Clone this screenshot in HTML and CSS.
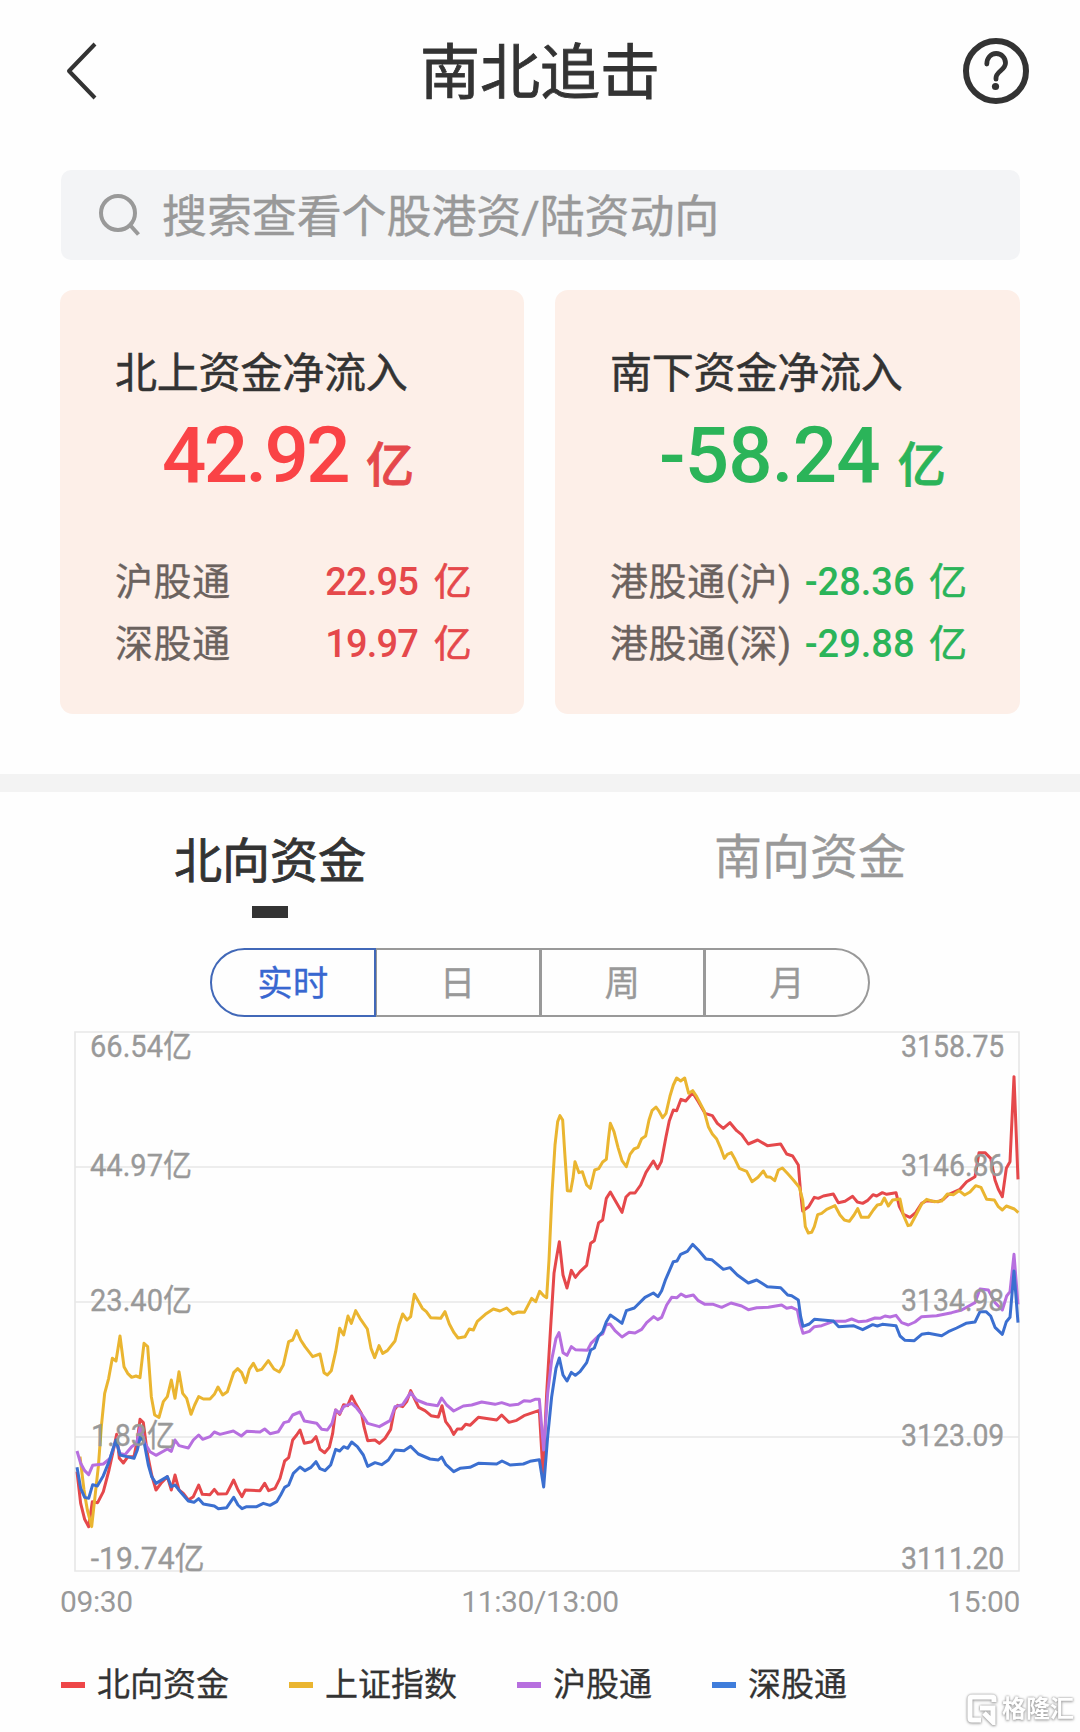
FILE: index.html
```html
<!DOCTYPE html>
<html lang="zh-CN">
<head>
<meta charset="utf-8">
<title>南北追击</title>
<link rel="stylesheet" href="styles.css">
</head>
<body>
<header class="header">
  <svg class="back" width="36" height="64" viewBox="0 0 36 64"><path d="M32 5 6 32 32 59" fill="none" stroke="#333" stroke-width="4" stroke-linejoin="round"/></svg>
  <h1 class="title">南北追击</h1>
  <svg class="help" width="68" height="68" viewBox="0 0 68 68" fill="none" stroke="#333" stroke-width="6">
    <circle cx="34" cy="34" r="30"/>
    <path d="M24.800 27c0-6 4-10.500 9.400-10.500s9.300 4.300 9.300 9.500c0 7-9.500 8.500-9.500 15v1.200" stroke-width="4.800" stroke-linecap="round"/>
    <circle cx="33.500" cy="49.500" r="3.600" fill="#333" stroke="none"/>
  </svg>
</header>

<div class="search">
  <svg width="44" height="44" viewBox="0 0 44 44" fill="none" stroke="#999" stroke-width="4"><circle cx="20" cy="20" r="17"/><path d="M32 32 40.500 41.500"/></svg>
  <span>搜索查看个股港资/陆资动向</span>
</div>

<section class="cards">
  <article class="card up">
    <h2>北上资金净流入</h2>
    <p class="total"><span class="num">42.92</span><span class="unit">亿</span></p>
    <div class="row"><span>沪股通</span><b>22.95 <i>亿</i></b></div>
    <div class="row"><span>深股通</span><b>19.97 <i>亿</i></b></div>
  </article>
  <article class="card down">
    <h2>南下资金净流入</h2>
    <p class="total"><span class="num">-58.24</span><span class="unit">亿</span></p>
    <div class="row"><span>港股通(沪)</span><b>-28.36 <i>亿</i></b></div>
    <div class="row"><span>港股通(深)</span><b>-29.88 <i>亿</i></b></div>
  </article>
</section>

<div class="divider"></div>

<nav class="tabs">
  <div class="tab active">北向资金</div>
  <div class="tab">南向资金</div>
</nav>

<div class="periods">
  <div class="period active">实时</div>
  <div class="period">日</div>
  <div class="period">周</div>
  <div class="period">月</div>
</div>

<svg class="chart" width="948" height="543" viewBox="-6 -6 2844 1629">
  <g class="grid">
    <path d="M0 0H2832V1617H0ZM0 405H2832M0 810H2832M0 1215H2832"/>
  </g>
  <g class="lines">
    <polyline stroke="#e5484b" points="6,1319 17,1414 29,1462 41,1484 52,1409 68,1412 85,1379 102,1314 113,1264 125,1207 133,1279 145,1293 159,1274 177,1274 187,1224 195,1162 205,1172 217,1264 230,1329 243,1374 258,1354 277,1334 289,1374 300,1329 312,1374 325,1384 340,1404 355,1394 371,1359 382,1387 405,1388 418,1372 429,1386 455,1385 476,1344 489,1374 501,1394 511,1374 555,1376 569,1354 581,1376 600,1369 615,1339 629,1287 641,1277 653,1224 665,1209 675,1194 688,1234 710,1229 723,1214 735,1252 749,1262 763,1246 773,1204 782,1134 794,1147 806,1118 818,1121 830,1092 843,1117 860,1146 867,1184 878,1226 900,1224 913,1234 930,1219 947,1192 958,1134 968,1120 983,1124 995,1109 1007,1076 1019,1101 1031,1126 1050,1136 1068,1151 1090,1155 1101,1121 1112,1169 1125,1186 1136,1207 1147,1191 1160,1191 1172,1177 1185,1180 1210,1156 1265,1164 1280,1149 1302,1171 1325,1165 1347,1151 1393,1135 1404,1324 1415,1084 1427,884 1437,724 1445,674 1453,629 1464,729 1476,768 1489,715 1501,736 1515,719 1535,700 1547,634 1558,626 1571,572 1583,564 1594,499 1606,480 1621,506 1641,541 1653,495 1665,483 1680,483 1697,459 1713,421 1735,387 1748,410 1759,389 1773,314 1783,266 1795,234 1805,236 1818,202 1832,207 1853,182 1870,209 1890,244 1912,251 1927,274 1945,289 1965,272 1985,296 2000,308 2020,336 2048,324 2077,341 2117,336 2135,366 2153,372 2170,399 2177,484 2183,537 2201,524 2218,496 2230,499 2245,492 2275,486 2290,512 2310,508 2333,493 2347,510 2363,514 2377,506 2394,488 2405,492 2422,482 2435,487 2463,482 2473,524 2485,547 2505,556 2522,542 2540,514 2555,506 2590,509 2605,502 2620,488 2655,472 2675,449 2700,434 2712,362 2730,362 2747,379 2760,444 2770,472 2782,494 2794,409 2805,389 2817,134 2829,442"/>
    <polyline stroke="#eab530" points="15,1274 27,1374 37,1434 50,1484 60,1394 70,1304 79,1184 89,1084 101,1039 112,979 123,987 135,912 147,1004 158,1024 170,1036 183,1032 195,1037 207,934 218,944 229,1094 239,1149 252,1156 265,1109 277,1094 289,1044 300,1099 312,1019 323,1084 335,1099 348,1147 359,1119 371,1094 385,1101 405,1101 418,1087 429,1065 443,1089 457,1079 476,1022 488,1010 500,1022 512,1052 523,1012 535,994 547,1016 560,1012 580,986 597,1011 613,1020 625,999 641,929 653,924 665,896 677,924 690,944 713,974 735,966 747,1022 757,1029 769,1016 782,959 794,889 806,909 819,852 829,874 842,836 855,859 877,891 888,949 899,977 912,941 923,964 937,956 960,927 972,879 983,846 996,864 1007,854 1018,787 1031,809 1042,829 1054,839 1067,857 1097,859 1110,839 1123,876 1137,902 1149,918 1170,914 1183,891 1195,894 1207,868 1231,847 1255,831 1275,837 1295,828 1313,846 1330,840 1348,841 1370,799 1382,809 1394,778 1406,791 1415,797 1422,684 1431,484 1440,339 1448,269 1455,251 1463,264 1470,374 1477,476 1487,477 1494,439 1500,389 1512,422 1522,419 1535,459 1546,469 1559,414 1571,410 1583,390 1594,382 1600,324 1606,274 1617,299 1629,346 1641,386 1654,404 1665,367 1677,351 1689,346 1700,320 1712,312 1722,264 1731,236 1743,225 1753,239 1763,257 1773,244 1785,192 1795,159 1805,138 1817,147 1829,138 1841,184 1853,176 1865,194 1887,236 1900,284 1912,306 1925,321 1936,346 1948,379 1957,367 1969,362 1980,382 1993,409 2015,418 2031,449 2049,436 2065,417 2075,434 2087,436 2099,446 2110,414 2122,408 2137,424 2155,444 2173,466 2183,504 2191,584 2200,603 2210,601 2218,584 2228,548 2240,544 2255,532 2280,521 2295,549 2308,564 2323,568 2337,549 2348,530 2359,556 2380,556 2395,534 2407,519 2418,517 2428,498 2440,522 2453,504 2475,501 2485,549 2499,581 2507,579 2523,549 2540,516 2555,502 2577,509 2600,507 2617,486 2635,488 2652,476 2669,489 2685,480 2702,461 2718,466 2735,502 2758,504 2770,524 2782,534 2794,522 2818,531 2830,542"/>
    <polyline stroke="#b76fdf" points="6,1257 17,1294 29,1316 41,1328 53,1300 85,1296 105,1279 123,1226 135,1264 150,1268 170,1244 185,1234 196,1184 210,1234 225,1259 243,1270 277,1251 289,1258 300,1224 312,1241 340,1248 355,1224 371,1209 383,1222 405,1214 418,1200 435,1207 475,1197 499,1212 515,1198 555,1200 569,1191 585,1205 610,1199 627,1172 641,1168 653,1149 675,1140 688,1167 725,1174 740,1192 757,1194 771,1174 782,1134 794,1144 806,1124 830,1114 845,1128 865,1154 878,1174 913,1184 945,1166 960,1124 983,1118 1007,1082 1025,1104 1055,1116 1088,1121 1100,1098 1115,1119 1136,1137 1165,1122 1190,1119 1220,1110 1260,1117 1280,1112 1305,1120 1330,1117 1347,1106 1365,1108 1380,1102 1393,1102 1406,1254 1418,1084 1430,984 1443,919 1452,902 1464,962 1476,970 1489,944 1501,953 1537,955 1548,934 1570,912 1583,906 1593,879 1605,876 1620,896 1641,915 1662,901 1680,903 1700,892 1715,872 1736,854 1748,863 1760,856 1775,819 1790,796 1806,797 1818,786 1832,794 1855,789 1870,806 1890,817 1915,817 1940,826 1968,813 2000,822 2020,833 2045,827 2080,826 2120,819 2135,829 2150,826 2167,834 2175,874 2184,904 2203,898 2218,884 2240,881 2275,868 2310,868 2330,861 2350,869 2375,867 2400,858 2415,859 2430,852 2445,855 2463,850 2480,872 2500,879 2520,870 2540,854 2585,851 2630,842 2660,834 2700,812 2715,771 2740,774 2760,812 2782,834 2795,792 2805,779 2817,667 2829,817"/>
    <polyline stroke="#3b6fd0" points="6,1306 17,1369 29,1396 41,1399 53,1358 67,1362 85,1331 102,1289 113,1254 123,1224 135,1269 155,1274 177,1279 187,1254 196,1214 207,1229 220,1299 230,1334 243,1354 277,1334 289,1364 300,1359 320,1384 340,1407 357,1411 371,1400 385,1416 418,1422 430,1430 455,1427 476,1396 489,1419 501,1430 515,1424 545,1424 565,1414 585,1420 605,1409 617,1389 629,1366 641,1359 655,1324 675,1305 690,1316 708,1306 723,1289 735,1310 750,1316 767,1299 782,1252 794,1257 806,1244 818,1249 830,1230 847,1244 865,1269 878,1303 900,1292 920,1298 940,1284 960,1254 987,1256 1007,1243 1030,1266 1065,1281 1090,1284 1100,1275 1113,1298 1136,1319 1155,1309 1185,1306 1210,1294 1265,1296 1281,1287 1305,1299 1345,1296 1365,1288 1393,1283 1406,1365 1418,1214 1430,1094 1443,1009 1453,978 1464,1029 1476,1047 1489,1021 1501,1030 1515,1019 1535,992 1547,954 1558,948 1571,912 1583,899 1594,869 1606,849 1622,860 1641,874 1654,836 1678,828 1710,796 1735,783 1749,794 1760,776 1772,742 1795,689 1806,687 1817,667 1837,658 1853,637 1870,654 1893,681 1910,683 1945,712 1965,707 1987,729 2020,753 2045,744 2077,764 2117,767 2138,789 2150,791 2170,804 2177,854 2184,883 2203,876 2218,862 2275,867 2291,884 2335,881 2363,893 2393,878 2407,882 2422,877 2463,881 2475,912 2490,925 2518,926 2540,907 2560,904 2600,911 2620,899 2645,888 2673,874 2700,870 2715,839 2733,839 2747,852 2760,886 2782,907 2794,869 2805,856 2817,717 2829,872"/>
  </g>
  <g class="labels">
    <text x="45" y="75" textLength="306" lengthAdjust="spacingAndGlyphs">66.54亿</text>
    <text x="45" y="432" textLength="306" lengthAdjust="spacingAndGlyphs">44.97亿</text>
    <text x="45" y="837" textLength="306" lengthAdjust="spacingAndGlyphs">23.40亿</text>
    <text x="48" y="1242" textLength="254" lengthAdjust="spacingAndGlyphs">1.83亿</text>
    <text x="47" y="1611" textLength="342" lengthAdjust="spacingAndGlyphs">-19.74亿</text>
    <text x="2478" y="75" textLength="310" lengthAdjust="spacingAndGlyphs">3158.75</text>
    <text x="2478" y="432" textLength="310" lengthAdjust="spacingAndGlyphs">3146.86</text>
    <text x="2478" y="837" textLength="310" lengthAdjust="spacingAndGlyphs">3134.98</text>
    <text x="2478" y="1242" textLength="310" lengthAdjust="spacingAndGlyphs">3123.09</text>
    <text x="2478" y="1611" textLength="310" lengthAdjust="spacingAndGlyphs">3111.20</text>
  </g>
</svg>

<div class="axis"><span>09:30</span><span>11:30/13:00</span><span>15:00</span></div>

<footer class="footer">
  <div class="legend">
    <span class="key north">北向资金</span>
    <span class="key index">上证指数</span>
    <span class="key hu">沪股通</span>
    <span class="key shen">深股通</span>
  </div>
  <div class="brand">
    <svg width="32" height="32" viewBox="0 0 32 32" fill="none" stroke="#fff" stroke-width="5"><path d="M28 9V6Q28 4 26 4H6Q4 4 4 6V25Q4 27 6 27H15M14 15H27V29L18 20"/></svg>
    <span>格隆汇</span>
  </div>
</footer>
</body>
</html>
```
FILE: styles.css
```css
* { box-sizing: border-box; }
body {
  margin: 0;
  width: 1080px;
  height: 1732px;
  overflow: hidden;
  background: #fefefe;
  color: #333;
  font-family: Roboto, "Noto Sans CJK SC", sans-serif;
}
h1, h2, p { margin: 0; font-weight: 400; }
svg { display: block; flex: none; }

.header {
  display: flex;
  align-items: center;
  justify-content: space-between;
  height: 142px;
  padding: 0 50px 0 63px;
}
.back { margin-right: 19px; }
.title { padding-top: 5px; font-size: 60px; line-height: 80px; -webkit-text-stroke: .8px #333; }

.search {
  display: flex;
  align-items: center;
  gap: 20px;
  height: 90px;
  margin: 28px 60px 0 61px;
  padding-left: 37px;
  border-radius: 10px;
  background: #f3f4f6;
  color: #999;
  font-size: 45px;
  line-height: 60px;
}
.search span { padding-top: 5px; letter-spacing: -.1px; -webkit-text-stroke: .4px #999; }

.cards {
  display: grid;
  grid-template-columns: 464px 465px;
  gap: 31px;
  margin: 30px 60px 0;
}
.card {
  height: 424px;
  padding: 54px 53px 0 55px;
  border-radius: 13px;
  background: #fdefe8;
}
.card h2 { font-size: 42px; line-height: 60px; letter-spacing: -.2px; -webkit-text-stroke: .5px #333; }
.total {
  display: flex;
  align-items: baseline;
  gap: 18px;
  height: 147px;
  padding-left: 47px;
  line-height: 103px;
  font-weight: 500;
}
.down .total { padding-left: 49px; }
.num { font-size: 78px; letter-spacing: -.8px; }
.up .num { letter-spacing: -2.6px; }
.unit { font-size: 48px; -webkit-text-stroke: .8px currentColor; }
.row {
  display: flex;
  justify-content: space-between;
  height: 61.5px;
  color: #6b625e;
  font-size: 38px;
  line-height: 62px;
  white-space: nowrap;
}
.row span { letter-spacing: .6px; -webkit-text-stroke: .3px currentColor; }
.row b { font-weight: 500; word-spacing: 5px; }
.up .row b { letter-spacing: -.8px; word-spacing: 7px; }
.row i { font-style: normal; font-weight: 400; -webkit-text-stroke: .6px currentColor; }
.up .total { color: #fa4346; }
.up b, .up .unit { color: #e5484b; }
.down .total, .down b { color: #2bb459; }

.divider { height: 18px; margin-top: 60px; background: #f3f3f3; }

.tabs {
  display: grid;
  grid-template-columns: 1fr 1fr;
  height: 156px;
  font-size: 48px;
  line-height: 64px;
  text-align: center;
}
.tab { padding-top: 34px; color: #999; -webkit-text-stroke: .3px currentColor; }
.tab.active { padding-top: 38px; color: #333; -webkit-text-stroke: .8px #333; }
.tab.active::after {
  content: "";
  display: block;
  width: 36px;
  height: 12px;
  margin: 12px auto 0;
  background: #333;
}

.periods {
  display: flex;
  width: 660px;
  height: 69px;
  margin: 0 auto;
  color: #999;
  font-size: 35.5px;
  line-height: 69px;
  text-align: center;
  -webkit-text-stroke: .3px currentColor;
}
.period {
  flex: 1;
  border: 2px solid #999;
  border-left-width: 1px;
}
.period:first-child { border-left-width: 2px; border-radius: 35px 0 0 35px; }
.period:last-child { border-right-width: 2px; border-radius: 0 35px 35px 0; }
.period.active { border-color: #4168b8; color: #3867d0; }

.chart { margin: 13px 0 0 73px; overflow: visible; }
.grid { fill: none; stroke: #e8e8e8; stroke-width: 5; }
.lines { fill: none; stroke-width: 9; stroke-linejoin: round; }
.labels { fill: #999; stroke: #999; stroke-width: 1; font-size: 92px; }

.axis {
  display: flex;
  justify-content: space-between;
  margin: 9px 60px 0;
  color: #999;
  font-size: 30px;
  line-height: 40px;
  letter-spacing: -.4px;
}

.footer {
  display: flex;
  align-items: flex-start;
  justify-content: space-between;
  margin-top: 37px;
  padding: 0 6px 0 61px;
}
.legend { display: flex; gap: 60px; font-size: 33px; line-height: 50px; -webkit-text-stroke: .3px currentColor; }
.key { position: relative; display: flex; align-items: center; gap: 12px; padding-top: 1px; }
.key::before { content: ""; width: 24px; height: 6px; background: currentColor; }
.north::before { background: #ee4648; }
.index::before { background: #eab530; }
.hu::before { background: #b76fdf; }
.shen::before { background: #3f7ddb; }

.brand {
  display: flex;
  align-items: center;
  gap: 4px;
  margin-top: 31px;
  color: #fff;
  font-size: 24px;
  line-height: 38px;
  font-weight: 700;
  filter: drop-shadow(0 0 1px #999) drop-shadow(0 1px 1px #bbb);
}
```
